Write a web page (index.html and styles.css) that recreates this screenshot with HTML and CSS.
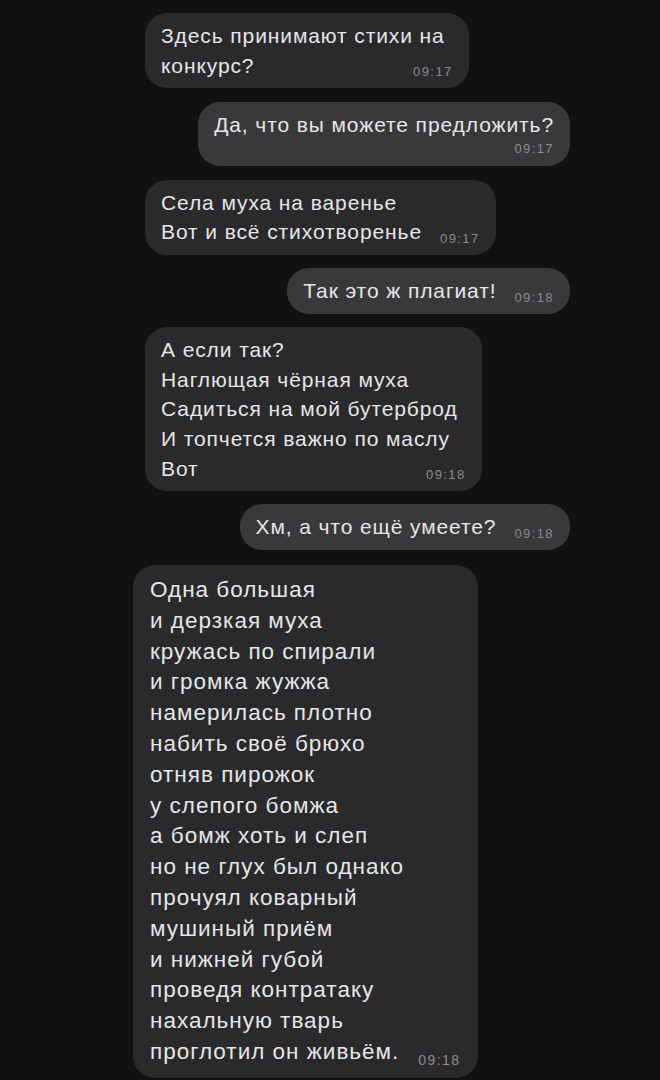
FILE: index.html
```html
<!DOCTYPE html>
<html lang="ru">
<head>
    <meta charset="UTF-8">
    <meta name="viewport" content="width=device-width, initial-scale=1.0">
    <title>Чат</title>
    <link rel="stylesheet" href="styles.css">
</head>
<body>

    <div class="chat">
        <!-- 1 -->
        <div class="msg in">
            <div class="line">Здесь принимают стихи на</div>
            <div class="last"><span>конкурс?</span><span class="time">09:17</span></div>
        </div>

        <div class="msg out">
            <div class="line">Да, что вы можете предложить?</div>
            <div class="time-row"><span class="time">09:17</span></div>
        </div>

        <div class="msg in">
            <div class="line">Села муха на варенье</div>
            <div class="last"><span>Вот и всё стихотворенье</span><span class="time">09:17</span></div>
        </div>

        <div class="msg out">
            <div class="last"><span>Так это ж плагиат!</span><span class="time">09:18</span></div>
        </div>

        <div class="msg in">
            <div class="line">А если так?</div>
            <div class="line">Наглющая чёрная муха</div>
            <div class="line">Садиться на мой бутерброд</div>
            <div class="line">И топчется важно по маслу</div>
            <div class="last"><span>Вот</span><span class="time">09:18</span></div>
        </div>

        <div class="msg out">
            <div class="last"><span>Хм, а что ещё умеете?</span><span class="time">09:18</span></div>
        </div>

        <!-- poem, screenshot is a bit bigger here -->
        <div class="msg in big">
            <div class="line">Одна большая</div>
            <div class="line">и дерзкая муха</div>
            <div class="line">кружась по спирали</div>
            <div class="line">и громка жужжа</div>
            <div class="line">намерилась плотно</div>
            <div class="line">набить своё брюхо</div>
            <div class="line">отняв пирожок</div>
            <div class="line">у слепого бомжа</div>
            <div class="line">а бомж хоть и слеп</div>
            <div class="line">но не глух был однако</div>
            <div class="line">прочуял коварный</div>
            <div class="line">мушиный приём</div>
            <div class="line">и нижней губой</div>
            <div class="line">проведя контратаку</div>
            <div class="line">нахальную тварь</div>
            <div class="last"><span>проглотил он живьём.</span><span class="time">09:18</span></div>
        </div>
    </div>

</body>
</html>
```

FILE: styles.css
```css
body {
    margin: 0;
    background-color: #111113;
    font-family: "Liberation Sans", Arial, sans-serif;
    color: #e6e6e8;
}
.chat {
    display: flex;
    flex-direction: column;
    gap: 13.4px;
    padding: 13px 90px 0 145px;
}
.msg {
    padding: 8px 16px;
    border-radius: 22px;
    font-size: 21px;
    line-height: 29.6px;
    letter-spacing: 0.9px;
    white-space: nowrap;
}
.in {
    align-self: flex-start;
    background-color: #2a2a2c;
}
.in .line {
    padding-right: 8px;
}
.out {
    align-self: flex-end;
    background-color: #39393b;
}
.last {
    display: flex;
    align-items: flex-end;
    gap: 18px;
}
.time {
    margin-left: auto;
    font-size: 13px;
    line-height: 16px;
    letter-spacing: 1.4px;
    color: #8c8c90;
}
.time-row {
    display: flex;
    line-height: 19px;
}
.time-row .time {
    line-height: 19px;
}
.big {
    margin-top: 1.5px;
    margin-left: -12px;
    padding: 10px 18px 10px 17px;
    font-size: 22.5px;
    line-height: 30.8px;
    letter-spacing: 1px;
}
.big .last {
    gap: 19px;
}
.big .time {
    font-size: 14px;
}
```
